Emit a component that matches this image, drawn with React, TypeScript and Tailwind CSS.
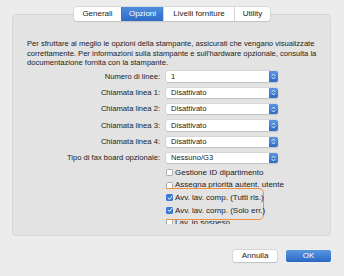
import { useState } from 'react';

const tabs = ['Generali', 'Opzioni', 'Livelli forniture', 'Utility'];

const intro = [
  'Per sfruttare al meglio le opzioni della stampante, assicurati che vengano visualizzate',
  "correttamente. Per informazioni sulla stampante e sull'hardware opzionale, consulta la",
  'documentazione fornita con la stampante.',
];

const selects = [
  { label: 'Numero di linee:', value: '1' },
  { label: 'Chiamata linea 1:', value: 'Disattivato' },
  { label: 'Chiamata linea 2:', value: 'Disattivato' },
  { label: 'Chiamata linea 3:', value: 'Disattivato' },
  { label: 'Chiamata linea 4:', value: 'Disattivato' },
  { label: 'Tipo di fax board opzionale:', value: 'Nessuno/G3' },
];

const Stepper = () => (
  <div className="w-[9px] h-full bg-gradient-to-b from-[#5b95e0] to-[#2f6cc9] rounded-r-[2px] flex items-center justify-center">
    <svg width="5" height="7" viewBox="0 0 5 7" fill="none">
      <path d="M1 2.6 L2.5 1.1 L4 2.6" stroke="white" strokeWidth="0.9" strokeLinecap="round" strokeLinejoin="round" />
      <path d="M1 4.4 L2.5 5.9 L4 4.4" stroke="white" strokeWidth="0.9" strokeLinecap="round" strokeLinejoin="round" />
    </svg>
  </div>
);

const Check = ({ checked }: { checked: boolean }) =>
  checked ? (
    <div className="w-[7px] h-[7px] rounded-[1.5px] bg-[#3a78d2] flex items-center justify-center shrink-0">
      <svg width="6" height="6" viewBox="0 0 6 6" fill="none">
        <path d="M1.2 3.1 L2.5 4.4 L4.8 1.4" stroke="white" strokeWidth="1" strokeLinecap="round" strokeLinejoin="round" />
      </svg>
    </div>
  ) : (
    <div className="w-[7px] h-[7px] rounded-[1.5px] bg-white border-[0.5px] border-[#a9a9a9] shrink-0" />
  );

const CheckRow = ({ label, checked }: { label: string; checked: boolean }) => (
  <div className="h-[12.6px] flex items-center gap-[2px] text-[8px]">
    <Check checked={checked} />
    <span>{label}</span>
  </div>
);

export default function App() {
  const [active, setActive] = useState('Opzioni');

  return (
    <div
      className="w-[344px] h-[276px] bg-[#ececec] text-[#222] text-[7.6px] leading-[9.5px] pt-[7px] overflow-hidden"
      style={{ fontFamily: '"Liberation Sans", Arial, sans-serif' }}
    >
      {/* Tab bar */}
      <div className="relative z-10 flex justify-center">
        <div className="flex h-[14px] bg-white rounded-[3px] shadow-[0_0_0_0.5px_#c8c8c8,0_0.5px_1px_rgba(0,0,0,0.15)] overflow-hidden text-[8px]">
          {tabs.map((t) => (
            <button
              key={t}
              onClick={() => setActive(t)}
              className={`flex items-center justify-center border-l-[0.5px] first:border-l-0 ${
                active === t
                  ? 'bg-gradient-to-b from-[#4f8ddd] to-[#2d6bc7] text-white border-[#3a74c8]'
                  : 'text-[#222] border-[#d4d4d4]'
              } ${t === 'Generali' ? 'w-[47px]' : t === 'Opzioni' ? 'w-[42px]' : t === 'Livelli forniture' ? 'w-[71px]' : 'w-[36px]'}`}
            >
              {t}
            </button>
          ))}
        </div>
      </div>

      {/* Panel */}
      <div className="ml-[12px] w-[319px] -mt-[7px] h-[222px] bg-[#e3e3e3] rounded-[4px] border-[0.5px] border-[#d8d8d8] pt-[24px] px-[14px]">
        <div>
          {intro.map((l) => (
            <div key={l} className="whitespace-nowrap">{l}</div>
          ))}
        </div>

        <div className="mt-[1px]">
          {selects.map((s) => (
            <div key={s.label} className="h-[16.3px] flex items-center gap-[6px]">
              <div className="w-[133px] text-right">{s.label}</div>
              <div className="w-[112px] h-[10.5px] bg-white rounded-[2px] shadow-[0_0_0_0.5px_#cfcfcf,0_0.5px_1px_rgba(0,0,0,0.2)] flex items-center">
                <span className="flex-1 pl-[5px]">{s.value}</span>
                <Stepper />
              </div>
            </div>
          ))}
        </div>

        <div className="ml-[139px] h-[58px] overflow-hidden">
          <CheckRow label="Gestione ID dipartimento" checked={false} />
          <CheckRow label="Assegna priorità autent. utente" checked={false} />
          <div className="relative">
            <div className="absolute -top-[3.5px] -bottom-[3px] -left-[8px] w-[106px] rounded-[5px] border-[1.5px] border-[#f0903c] bg-[#e3e3e3]" />
            <div className="relative">
              <CheckRow label="Avv. lav. comp. (Tutti ris.)" checked />
              <CheckRow label="Avv. lav. comp. (Solo err.)" checked />
            </div>
          </div>
          <CheckRow label="Lav. in sospeso" checked={false} />
        </div>
      </div>

      {/* Buttons */}
      <div className="flex justify-end gap-[9px] pr-[13px] mt-[14px] text-[8px]">
        <button className="w-[44px] h-[11.5px] bg-white rounded-[2px] shadow-[0_0_0_0.5px_#c6c6c6,0_0.5px_1px_rgba(0,0,0,0.2)] flex items-center justify-center">
          Annulla
        </button>
        <button className="w-[45px] h-[12.5px] -mt-[0.5px] rounded-[2px] bg-gradient-to-b from-[#5a97e2] to-[#2a67c4] text-white flex items-center justify-center">
          OK
        </button>
      </div>
    </div>
  );
}
